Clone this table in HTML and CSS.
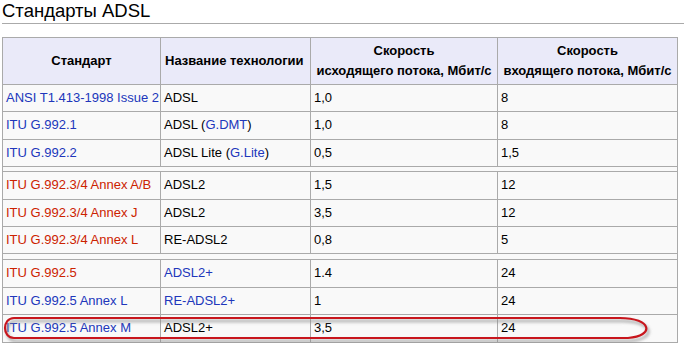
FILE: index.html
```html
<!DOCTYPE html>
<html lang="ru">
<head>
<meta charset="utf-8">
<title>Стандарты ADSL</title>
<link rel="stylesheet" href="styles.css">
</head>
<body>
<h2 class="title">Стандарты ADSL</h2>
<div class="wrap">
<table class="wikitable">
  <colgroup>
    <col class="c1"><col class="c2"><col class="c3"><col class="c4">
  </colgroup>
  <thead>
    <tr>
      <th>Стандарт</th>
      <th class="left">Название технологии</th>
      <th>Скорость<br>исходящего потока, Мбит/с</th>
      <th>Скорость<br>входящего потока, Мбит/с</th>
    </tr>
  </thead>
  <tbody>
    <tr><td><a class="blue">ANSI T1.413-1998 Issue 2</a></td><td>ADSL</td><td>1,0</td><td>8</td></tr>
    <tr><td><a class="blue">ITU G.992.1</a></td><td>ADSL (<a class="blue">G.DMT</a>)</td><td>1,0</td><td>8</td></tr>
    <tr><td><a class="blue">ITU G.992.2</a></td><td>ADSL Lite (<a class="blue">G.Lite</a>)</td><td>0,5</td><td>1,5</td></tr>
    <tr class="sep"><td colspan="4"></td></tr>
    <tr><td><a class="red">ITU G.992.3/4 Annex A/B</a></td><td>ADSL2</td><td>1,5</td><td>12</td></tr>
    <tr><td><a class="red">ITU G.992.3/4 Annex J</a></td><td>ADSL2</td><td>3,5</td><td>12</td></tr>
    <tr><td><a class="red">ITU G.992.3/4 Annex L</a></td><td>RE-ADSL2</td><td>0,8</td><td>5</td></tr>
    <tr class="sep sep2"><td colspan="4"></td></tr>
    <tr><td><a class="red">ITU G.992.5</a></td><td><a class="blue">ADSL2+</a></td><td>1.4</td><td>24</td></tr>
    <tr><td><a class="blue">ITU G.992.5 Annex L</a></td><td><a class="blue">RE-ADSL2+</a></td><td>1</td><td>24</td></tr>
    <tr><td><a class="blue">ITU G.992.5 Annex M</a></td><td>ADSL2+</td><td>3,5</td><td>24</td></tr>
  </tbody>
</table>
<svg class="mark" width="660" height="30" viewBox="0 0 660 30" aria-hidden="true">
  <defs>
    <filter id="sh" x="-5%" y="-50%" width="110%" height="200%">
      <feGaussianBlur stdDeviation="1.6"/>
    </filter>
  </defs>
  <path d="M14 5 H620 C652 5 655 23 628 25 H14 C2 25 2 5 14 5 Z" fill="none" stroke="#8a8a8a" stroke-opacity="0.7" stroke-width="2.5" filter="url(#sh)" transform="translate(2,3)"/>
  <path d="M14 5 H620 C652 5 655 23 628 25 H14 C2 25 2 5 14 5 Z" fill="none" stroke="#c8161d" stroke-width="2.2"/>
</svg>
</div>
</body>
</html>
```
FILE: styles.css
```css
html, body {
  margin: 0;
  padding: 0;
  background: #fff;
}
body {
  font-family: "Liberation Sans", Arial, sans-serif;
  color: #000;
}
.title {
  margin: 0 0 0 2px;
  padding: 0 0 1px 0;
  font-size: 18.5px;
  line-height: 22px;
  font-weight: normal;
  border-bottom: 1px solid #aaa;
}
.wrap {
  position: relative;
  margin: 13px 0 0 2px;
  width: 676px;
}
.wikitable {
  border-collapse: collapse;
  table-layout: fixed;
  width: 675px;
  font-size: 13px;
  background: #f9f9f9;
  border: 1px solid #aaa;
}
.c1 { width: 158px; }
.c2 { width: 150px; }
.c3 { width: 187px; }
.c4 { width: 180px; }
.wikitable th,
.wikitable td {
  border: 1px solid #aaa;
  padding: 4px 4px 4px 3px;
  line-height: 18.4px;
  text-align: left;
  vertical-align: middle;
  white-space: nowrap;
}
.wikitable th {
  background: #eaeaf9;
  font-weight: bold;
  text-align: center;
  padding: 3px 2px;
  line-height: 20px;
}
.wikitable th.left {
  text-align: left;
  padding-left: 4px;
}
.wikitable tr.sep td {
  padding: 0;
  height: 4px;
  line-height: 0;
  font-size: 0;
}
.wikitable tr.sep2 td {
  height: 5px;
}
a { text-decoration: none; }
.blue { color: #2036bb; }
.red { color: #cc2200; }
.mark {
  position: absolute;
  left: -2px;
  top: 276px;
  pointer-events: none;
}
```
